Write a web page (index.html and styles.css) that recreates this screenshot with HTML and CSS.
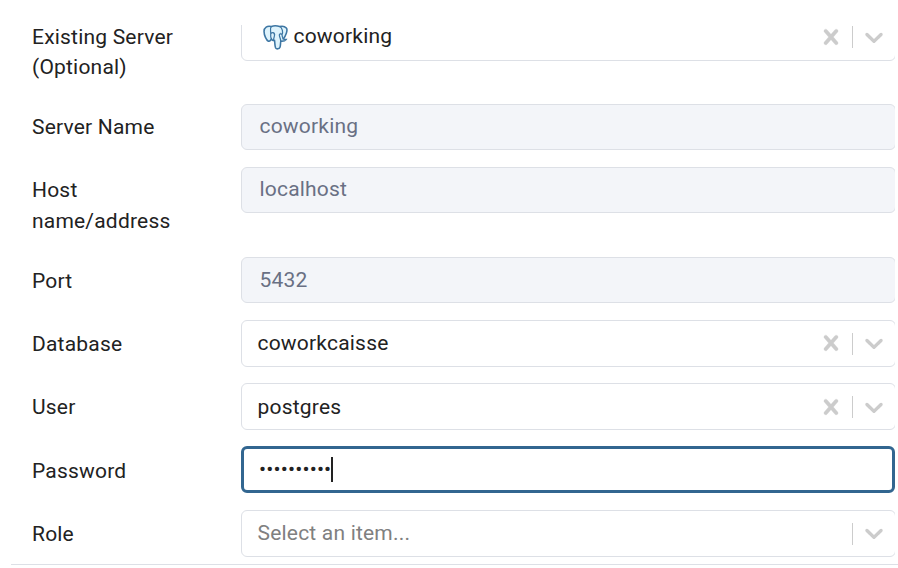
FILE: index.html
```
<!DOCTYPE html>
<html lang="en">
<head>
<meta charset="utf-8">
<title>Connect to Server</title>
<link rel="stylesheet" href="styles.css">
</head>
<body>
<svg class="defs" width="0" height="0">
  <symbol id="clear" viewBox="0 0 20 20"><path d="M14.348 14.849c-0.469 0.469-1.229 0.469-1.697 0l-2.651-3.030-2.651 3.029c-0.469 0.469-1.229 0.469-1.697 0-0.469-0.469-0.469-1.229 0-1.697l2.758-3.15-2.759-3.152c-0.469-0.469-0.469-1.228 0-1.697s1.228-0.469 1.697 0l2.652 3.031 2.651-3.031c0.469-0.469 1.228-0.469 1.697 0s0.469 1.229 0 1.697l-2.758 3.152 2.758 3.15c0.469 0.469 0.469 1.229 0 1.698z"/></symbol>
  <symbol id="chevron" viewBox="0 0 20 20"><path d="M4.516 7.548c0.436-0.446 1.043-0.481 1.576 0l3.908 3.747 3.908-3.747c0.533-0.481 1.141-0.446 1.574 0 0.436 0.445 0.408 1.197 0 1.615-0.406 0.418-4.695 4.502-4.695 4.502-0.217 0.223-0.502 0.335-0.787 0.335s-0.57-0.112-0.789-0.335c0 0-4.287-4.084-4.695-4.502s-0.436-1.17 0-1.615z"/></symbol>
</svg>
<main class="dialog">
  <form class="form">
    <div class="row tall">
      <label class="label existing">Existing Server (Optional)</label>
      <div class="field select server">
        <svg class="elephant" viewBox="0 0 24 24">
          <path class="skin" d="M8 1.500C4 .5 1 2.200 1 6.200c0 3.500 2.200 8.500 4.200 9.400 1.300.5 2-1 2.900-2.100.6 1.300 1.700 1.600 3 1.500.4 2.200.1 5 1 6.900.8 1.500 3.500 1.300 4.200-.5.600-1.600.4-3.700.8-5.900 1.900.2 4.100-.3 5-1.600-1.200 0-2 0-2.600-.5C21.600 10.500 24.200 5 22.400 2.900 20.700 1 18.200.9 16 1.500 13.300.6 10.200.6 8 1.500z"/>
          <path class="line" d="M8 1.300C6.200 3.300 7.700 6.500 7.400 8.700c-.2 1.900 0 3.400.7 5M16 1.300c2.900 2 3.300 5.500 2.300 7.700-.2 1.800.7 3.100 1.200 4.600M7.500 8.200c1.500-1.500 3.500-1 3.600.6.200 2.200-.9 3.500-.9 5.200l.9 1.200M18.300 9c-2.400-1.500-3.100.3-2.300 2.200.6 1.500 1.100 2.900 1.100 4.500M9.800 8.300h.8M16.500 8h.6"/>
        </svg>
        <span class="value">coworking</span>
        <svg class="icon cross"><use href="#clear"/></svg><i class="rule"></i><svg class="icon"><use href="#chevron"/></svg>
      </div>
    </div>
    <div class="row">
      <label class="label">Server Name</label>
      <div class="field input disabled"><span class="value">coworking</span></div>
    </div>
    <div class="row tall">
      <label class="label">Host name/address</label>
      <div class="field input disabled"><span class="value">localhost</span></div>
    </div>
    <div class="row shifted">
      <label class="label">Port</label>
      <div class="field input disabled"><span class="value">5432</span></div>
    </div>
    <div class="row shifted">
      <label class="label">Database</label>
      <div class="field select">
        <span class="value">coworkcaisse</span>
        <svg class="icon cross"><use href="#clear"/></svg><i class="rule"></i><svg class="icon"><use href="#chevron"/></svg>
      </div>
    </div>
    <div class="row shifted">
      <label class="label">User</label>
      <div class="field select low">
        <span class="value">postgres</span>
        <svg class="icon cross"><use href="#clear"/></svg><i class="rule"></i><svg class="icon"><use href="#chevron"/></svg>
      </div>
    </div>
    <div class="row password">
      <label class="label">Password</label>
      <div class="field input focused"><span class="dots">••••••••••</span><i class="caret"></i></div>
    </div>
    <div class="row shifted">
      <label class="label">Role</label>
      <div class="field select">
        <span class="value placeholder">Select an item...</span>
        <i class="rule"></i><svg class="icon"><use href="#chevron"/></svg>
      </div>
    </div>
  </form>
</main>
</body>
</html>
```
FILE: styles.css
```
* { box-sizing: border-box; }
body {
  margin: 0;
  background: #fff;
  color: #222;
  font: 21px/30.5px Roboto, sans-serif;
  letter-spacing: 0.2px;
  overflow: hidden;
}
.defs { display: block; }
.dialog {
  margin: 25px 0 0 11px;
  height: 540px;
  overflow: hidden;
  border-bottom: 1px solid #dde0e6;
}
.form {
  width: 884px;
  margin-top: -11px;
  padding-left: 21px;
  overflow: hidden;
}
.row {
  display: grid;
  grid-template-columns: 209px 655px;
  height: 63px;
}
.row.tall { height: 90px; }
.row.password { height: 64px; }
.label { width: 170px; padding-top: 8px; }
.existing { line-height: 30px; }
.shifted .label { padding-top: 9px; }
.shifted .value { padding-top: 2px; }
.password .label { padding-top: 10px; }
.field {
  display: flex;
  align-items: center;
  height: 47px;
  border: 1px solid #dde0e6;
  border-radius: 6px;
  padding-bottom: 2px;
}
.input { height: 46px; padding-left: 17.5px; }
.select { padding-left: 15.5px; padding-right: 6px; }
.low { padding-bottom: 0; }
.shifted .low .value { padding-top: 1px; }
.disabled { background: #f3f5f9; color: #697084; }
.value { flex: 1; }
.placeholder { color: #808080; }
.elephant {
  width: 25px;
  height: 25px;
  margin: 2px 6px 0 5px;
}
.skin { fill: #def3fc; stroke: #3d76a3; stroke-width: 1.5; }
.line { fill: none; stroke: #3d76a3; stroke-width: 1.2; }
.icon { width: 30px; height: 30px; fill: #ccc; margin-top: 1px; }
.cross { stroke: #ccc; stroke-width: 0.2px; }
.rule { width: 1px; height: 22px; background: #ccc; margin: 2px 6px 0; }
.low .rule, .server .rule { margin-top: 0; }
.focused {
  width: 654px;
  height: 47px;
  border: 3px solid #326690;
  padding: 0 0 0 15px;
}
.dots { letter-spacing: 0.15px; }
.caret { width: 2px; height: 25px; background: #222; }
```
